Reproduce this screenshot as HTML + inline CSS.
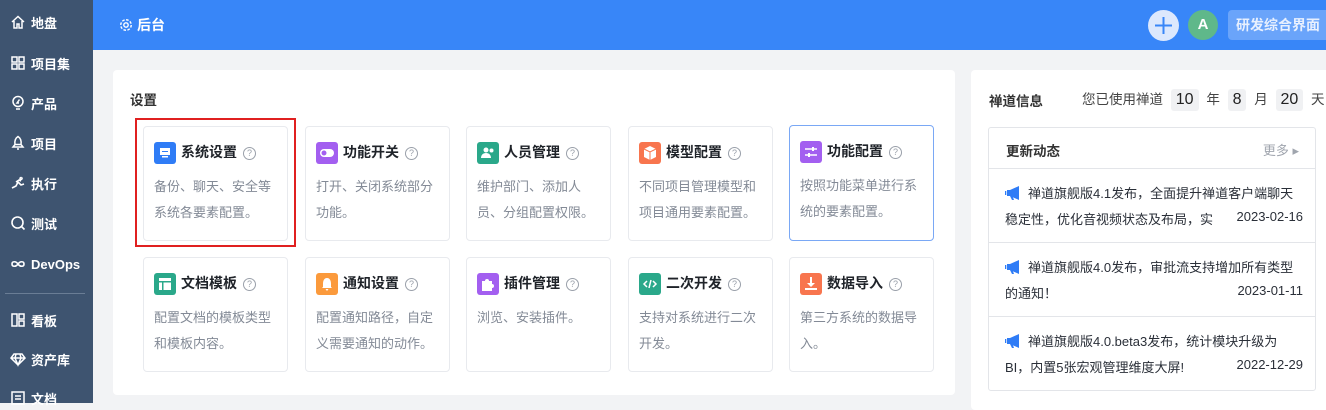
<!DOCTYPE html>
<html><head><meta charset="utf-8"><style>
*{box-sizing:border-box;margin:0;padding:0}
body{width:1326px;height:403px;overflow:hidden;background:#f2f3f5;font-family:"Liberation Sans","Noto Sans CJK SC",sans-serif;font-size:13px;color:#1f2329;position:relative}
.side{position:absolute;left:0;top:0;width:93px;height:403px;background:#3e5470;color:#fff}
.si{position:absolute;left:10px;height:20px;display:flex;align-items:center;font-weight:bold;font-size:13px}
.si svg{width:16px;height:16px;margin-right:5px}
.hdr{position:absolute;left:93px;top:0;right:0;height:50px;background:#3886f8;color:#fff}
.main{position:absolute;left:113px;top:70px;width:842px;height:325px;background:#fff;border-radius:4px}
.card{position:absolute;width:145px;height:115px;border:1px solid #e8eaee;border-radius:4px;background:#fff}
.card .ic{position:absolute;left:10px;top:15px;width:22px;height:22px;border-radius:3px}
.card .t{position:absolute;left:37px;top:15px;font-weight:bold;font-size:14px;white-space:nowrap}
.card .t .q{display:inline-block;width:13px;height:13px;border:1px solid #9aa0aa;border-radius:50%;color:#9aa0aa;font-size:9px;text-align:center;line-height:11px;font-weight:normal;margin-left:6px;vertical-align:1px}
.card .d{position:absolute;left:10px;top:47px;width:128px;font-size:13px;color:#838a96;line-height:26px}
.right{position:absolute;left:971px;top:70px;width:360px;height:340px;background:#fff;border-radius:4px}
.box{position:absolute;left:17px;top:57px;width:328px;height:264px;border:1px solid #e3e5e9;border-radius:3px}
.row{position:absolute;left:0;width:326px;height:74px;border-top:1px solid #e3e5e9;font-size:13px;color:#2a2f38}
.row .l1{position:absolute;left:16px;top:14px;white-space:nowrap;display:flex;align-items:center}
.row .l1 svg{margin-right:6px}
.row .l2{position:absolute;left:16px;top:40px;white-space:nowrap}
.row .dt{position:absolute;right:12px;top:40px;background:#fff;padding-left:10px;font-size:13px}
.num{display:inline-block;background:#f0f1f3;padding:0 5px;border-radius:3px;font-size:16px;line-height:22px;color:#222;margin:0 4px}
</style></head><body>
<div class="side">
<div class="si" style="top:12px"><svg viewBox="0 0 16 16" fill="none" stroke="#fff" stroke-width="1.5"><path d="M2 8L8 2.5 14 8M4 7v7h3v-4h2v4h3V7"/></svg>地盘</div>
<div class="si" style="top:53px"><svg viewBox="0 0 16 16" fill="none" stroke="#fff" stroke-width="1.5"><rect x="2" y="2" width="5" height="5"/><rect x="9" y="2" width="5" height="5"/><rect x="2" y="9" width="5" height="5"/><rect x="9" y="9" width="5" height="5"/></svg>项目集</div>
<div class="si" style="top:93px"><svg viewBox="0 0 16 16" fill="none" stroke="#fff" stroke-width="1.5"><circle cx="8" cy="6.5" r="5"/><path d="M6 14h4M9.5 4.5L7 8h2"/></svg>产品</div>
<div class="si" style="top:133px"><svg viewBox="0 0 16 16" fill="none" stroke="#fff" stroke-width="1.5"><path d="M8 1.5c3 2 3.5 5 3 8H5c-.5-3 0-6 3-8zM5 9.5L3 12h10l-2-2.5M7 14h2"/></svg>项目</div>
<div class="si" style="top:173px"><svg viewBox="0 0 16 16" fill="none" stroke="#fff" stroke-width="1.6"><path d="M2 13l4-2 2-4 3 3 3-1M6 7l3-2 2 1M11 2.5a1 1 0 1 0 .1 0"/></svg>执行</div>
<div class="si" style="top:213px"><svg viewBox="0 0 16 16" fill="none" stroke="#fff" stroke-width="1.6"><circle cx="7.5" cy="7.5" r="5.5"/><path d="M11.5 11.5l3 3"/></svg>测试</div>
<div class="si" style="top:254px"><svg viewBox="0 0 16 16" fill="none" stroke="#fff" stroke-width="1.6"><path d="M8 8c-2-3-6-3-6 0s4 3 6 0 6-3 6 0-4 3-6 0z"/></svg>DevOps</div>
<div style="position:absolute;left:5px;top:293px;width:80px;height:1px;background:#6a7d95"></div>
<div class="si" style="top:310px"><svg viewBox="0 0 16 16" fill="none" stroke="#fff" stroke-width="1.5"><rect x="2" y="2" width="5" height="12"/><rect x="9" y="2" width="5" height="5"/><rect x="9" y="9" width="5" height="5"/></svg>看板</div>
<div class="si" style="top:349px"><svg viewBox="0 0 16 16" fill="none" stroke="#fff" stroke-width="1.5"><path d="M4 3h8l3 4-7 7-7-7zM1 7h14M6 3L5 7l3 7 3-7-1-4"/></svg>资产库</div>
<div class="si" style="top:388px"><svg viewBox="0 0 16 16" fill="none" stroke="#fff" stroke-width="1.5"><rect x="2" y="2" width="12" height="12"/><path d="M5 6h6M5 9h6"/></svg>文档</div>
</div>
<div class="hdr">
<div style="position:absolute;left:26px;top:15px;font-weight:bold;font-size:14px;display:flex;align-items:center"><svg width="14" height="14" viewBox="0 0 16 16" fill="none" stroke="#fff" stroke-width="1.6" style="margin-right:4px"><circle cx="8" cy="8" r="2.5"/><circle cx="8" cy="8" r="6" stroke-dasharray="3 1.7"/></svg>后台</div>
<div style="position:absolute;left:1055px;top:10px;width:31px;height:31px;border-radius:50%;background:#dce8fd"><svg width="31" height="31" viewBox="0 0 31 31"><path d="M15.5 7v17M7 15.5h17" stroke="#3886f8" stroke-width="2"/></svg></div>
<div style="position:absolute;left:1095px;top:10px;width:30px;height:30px;border-radius:50%;background:#5fb88a;color:#fff;font-weight:bold;font-size:15px;text-align:center;line-height:30px">A</div>
<div style="position:absolute;left:1135px;top:10px;width:110px;height:30px;border-radius:4px;background:#6aa4fa;color:#e8f0fe;font-weight:bold;font-size:14px;line-height:30px;padding-left:8px;white-space:nowrap">研发综合界面</div>
</div>
<div class="main">
<div style="position:absolute;left:17px;top:19px;font-size:13.5px;font-weight:bold;color:#333">设置</div>
<div style="position:absolute;left:22px;top:48px;width:161px;height:129px;border:2px solid #e02020"></div>
<div class="card" style="left:30px;top:56px"><div class="ic" style="background:#2f7cf6"><svg width="22" height="22"><rect x="6" y="6" width="10" height="7" fill="#fff"/><rect x="8" y="14" width="6" height="1.5" fill="#fff"/><rect x="8" y="9" width="6" height="1" fill="#2f7cf6"/></svg></div><div class="t">系统设置<span class="q">?</span></div><div class="d">备份、聊天、安全等系统各要素配置。</div></div>
<div class="card" style="left:192px;top:56px"><div class="ic" style="background:#a35ff0"><svg width="22" height="22"><rect x="4" y="7" width="14" height="8" rx="4" fill="#fff"/><circle cx="8" cy="11" r="2.5" fill="#a35ff0"/></svg></div><div class="t">功能开关<span class="q">?</span></div><div class="d">打开、关闭系统部分功能。</div></div>
<div class="card" style="left:353px;top:56px"><div class="ic" style="background:#2aa88a"><svg width="22" height="22" fill="#fff"><circle cx="9" cy="8" r="2.5"/><path d="M4 16c0-3 2-5 5-5s5 2 5 5z"/><circle cx="14.5" cy="8.5" r="2"/></svg></div><div class="t">人员管理<span class="q">?</span></div><div class="d">维护部门、添加人员、分组配置权限。</div></div>
<div class="card" style="left:515px;top:56px"><div class="ic" style="background:#f8754e"><svg width="22" height="22" fill="#fff"><path d="M11 4l6 3v8l-6 3-6-3V7z"/><path d="M5 7l6 3 6-3M11 10v8" stroke="#f8754e" stroke-width="1" fill="none"/></svg></div><div class="t">模型配置<span class="q">?</span></div><div class="d">不同项目管理模型和项目通用要素配置。</div></div>
<div class="card" style="left:676px;top:55px;border-color:#7aa8f5;height:116px"><div class="ic" style="background:#a35ff0"><svg width="22" height="22" stroke="#fff" stroke-width="1.6"><path d="M5 8h12M5 14h12"/><path d="M13 6v4M9 12v4" stroke-width="2"/></svg></div><div class="t">功能配置<span class="q">?</span></div><div class="d">按照功能菜单进行系统的要素配置。</div></div>
<div class="card" style="left:30px;top:187px"><div class="ic" style="background:#2aa88a"><svg width="22" height="22"><rect x="5" y="5" width="12" height="12" fill="#fff"/><rect x="5" y="8" width="12" height="1.5" fill="#2aa88a"/><rect x="8" y="8" width="1.5" height="9" fill="#2aa88a"/></svg></div><div class="t">文档模板<span class="q">?</span></div><div class="d">配置文档的模板类型和模板内容。</div></div>
<div class="card" style="left:192px;top:187px"><div class="ic" style="background:#fb9a3c"><svg width="22" height="22" fill="#fff"><path d="M11 5c3 0 4 3 4 6v3l1 1H6l1-1v-3c0-3 1-6 4-6zM9.5 16h3l-1.5 2z"/></svg></div><div class="t">通知设置<span class="q">?</span></div><div class="d">配置通知路径，自定义需要通知的动作。</div></div>
<div class="card" style="left:353px;top:187px"><div class="ic" style="background:#a35ff0"><svg width="22" height="22" fill="#fff"><path d="M5 8h3a2 2 0 1 1 4 0h3v3a2 2 0 1 1 0 4v3H5z"/></svg></div><div class="t">插件管理<span class="q">?</span></div><div class="d">浏览、安装插件。</div></div>
<div class="card" style="left:515px;top:187px"><div class="ic" style="background:#2aa88a"><svg width="22" height="22" stroke="#fff" stroke-width="1.5" fill="none"><path d="M8 8l-3 3 3 3M14 8l3 3-3 3M12 7l-2 8"/></svg></div><div class="t">二次开发<span class="q">?</span></div><div class="d">支持对系统进行二次开发。</div></div>
<div class="card" style="left:676px;top:187px"><div class="ic" style="background:#f8754e"><svg width="22" height="22" fill="#fff"><path d="M10 4h2v6h3l-4 4-4-4h3z"/><rect x="5" y="15" width="12" height="2"/></svg></div><div class="t">数据导入<span class="q">?</span></div><div class="d">第三方系统的数据导入。</div></div>
</div>
<div class="right">
<div style="position:absolute;left:18px;top:20px;font-weight:bold;font-size:13.5px;color:#333">禅道信息</div>
<div style="position:absolute;left:111px;top:18px;font-size:13.5px;color:#444;white-space:nowrap">您已使用禅道 <span class="num">10</span> 年 <span class="num">8</span> 月 <span class="num">20</span> 天</div>
<div class="box">
<div style="position:absolute;left:17px;top:12px;font-weight:bold;font-size:13.5px;color:#333">更新动态</div>
<div style="position:absolute;right:16px;top:12px;font-size:13px;color:#a0a5ae">更多 ▸</div>
<div class="row" style="top:40px"><div class="l1"><svg width="17" height="14" viewBox="0 0 17 14" fill="#2f7cf6"><path d="M5 4l9-4v14l-9-4z"/><rect x="2" y="4" width="3" height="6"/><rect x="0" y="5" width="1.3" height="4"/><path d="M5 10l2 4h2l-1.5-4z"/></svg>禅道旗舰版4.1发布，全面提升禅道客户端聊天</div><div class="l2">稳定性，优化音视频状态及布局，实</div><div class="dt">2023-02-16</div></div>
<div class="row" style="top:114px"><div class="l1"><svg width="17" height="14" viewBox="0 0 17 14" fill="#2f7cf6"><path d="M5 4l9-4v14l-9-4z"/><rect x="2" y="4" width="3" height="6"/><rect x="0" y="5" width="1.3" height="4"/><path d="M5 10l2 4h2l-1.5-4z"/></svg>禅道旗舰版4.0发布，审批流支持增加所有类型</div><div class="l2">的通知！</div><div class="dt">2023-01-11</div></div>
<div class="row" style="top:188px"><div class="l1"><svg width="17" height="14" viewBox="0 0 17 14" fill="#2f7cf6"><path d="M5 4l9-4v14l-9-4z"/><rect x="2" y="4" width="3" height="6"/><rect x="0" y="5" width="1.3" height="4"/><path d="M5 10l2 4h2l-1.5-4z"/></svg>禅道旗舰版4.0.beta3发布，统计模块升级为</div><div class="l2">BI，内置5张宏观管理维度大屏!</div><div class="dt">2022-12-29</div></div>
</div>
</div>
</body></html>
